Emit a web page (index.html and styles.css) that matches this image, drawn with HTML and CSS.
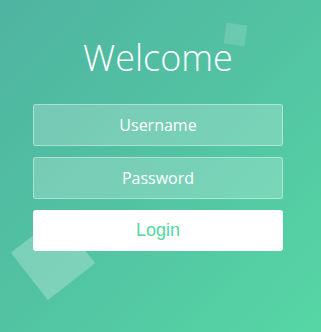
FILE: index.html
```html
<!DOCTYPE html>
<html>
<head>
<meta charset="utf-8">
<link rel="stylesheet" href="styles.css">
</head>
<body>
<div class="page">
  <div class="square square-small"></div>
  <div class="square square-big"></div>
  <div class="wrap">
    <h1 class="title">Welcome</h1>
    <form class="form">
      <input class="field" type="text" placeholder="Username">
      <input class="field" type="password" placeholder="Password">
      <button class="login" type="button">Login</button>
    </form>
  </div>
</div>
</body>
</html>
```

FILE: styles.css
```css
html, body {
  margin: 0;
  padding: 0;
  height: 100%;
}
.page {
  position: relative;
  height: 332px;
  overflow: hidden;
  background: linear-gradient(to bottom right, #4fb4a1 0%, #52c3a2 50%, #56d6a5 100%);
  font-family: "Open Sans", sans-serif;
}
.wrap {
  position: relative;
  width: 250px;
  margin-left: 33px;
  padding-top: 33px;
}
.title {
  margin: 0;
  font-family: "Open Sans", sans-serif;
  font-weight: 300;
  font-size: 36px;
  line-height: 50px;
  color: #fff;
  text-align: center;
}
.form {
  display: flex;
  flex-direction: column;
  gap: 11px;
  margin-top: 21px;
}
.field {
  box-sizing: border-box;
  width: 250px;
  height: 42px;
  margin: 0;
  border: 1px solid rgba(255, 255, 255, 0.4);
  border-radius: 3px;
  background: rgba(255, 255, 255, 0.22);
  color: #fff;
  font-family: "Open Sans", sans-serif;
  font-size: 16px;
  text-align: center;
  outline: none;
}
.field::placeholder {
  color: #fff;
  opacity: 1;
}
.login {
  box-sizing: border-box;
  width: 250px;
  height: 41px;
  margin: 0;
  border: 0;
  border-radius: 3px;
  background: #fff;
  color: #52d8a2;
  font-family: "Liberation Sans", Arial, sans-serif;
  font-size: 18px;
}
.square {
  position: absolute;
}
.square-small {
  left: 225px;
  top: 24px;
  width: 21px;
  height: 21px;
  background: rgba(255, 255, 255, 0.15);
  transform: rotate(8deg);
}
.square-big {
  left: 22.5px;
  top: 228px;
  width: 60px;
  height: 60px;
  background: rgba(255, 255, 255, 0.25);
  transform: rotate(52deg);
}
```
